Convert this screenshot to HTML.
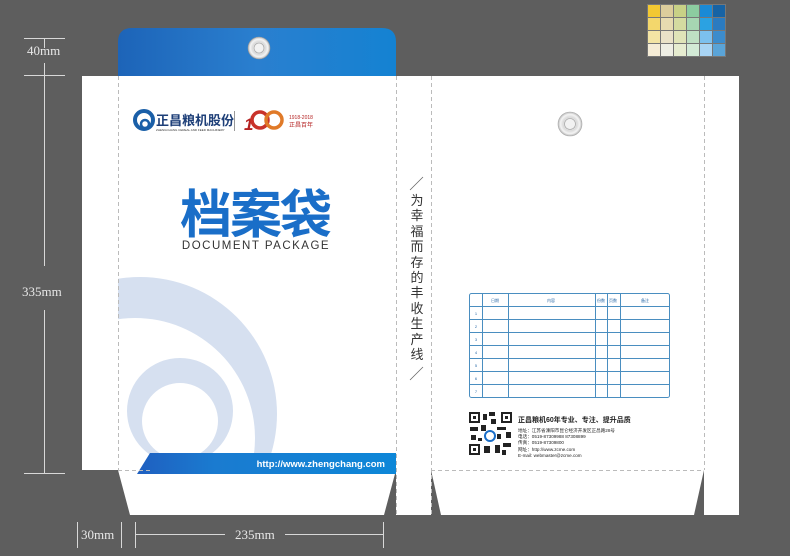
<!DOCTYPE html>
<html><head><meta charset="utf-8"><style>
body{margin:0;width:790px;height:556px;background:#5e5e5e;position:relative;overflow:hidden;font-family:"Liberation Sans","Noto Sans CJK SC",sans-serif}
.a{position:absolute}
.dim{color:#e8e8e8;font-family:"Liberation Serif",serif;font-size:13px}
.ln{background:#d8d8d8;position:absolute}
.vt{position:absolute;left:409px;width:16px;font-size:13px;color:#333;text-align:center;line-height:15.4px}
</style></head><body>
<div class="a" style="left:647px;top:4px;display:grid;grid-template-columns:repeat(6,12px);grid-auto-rows:12px;gap:1px;background:#777;padding:1px">
<div style="background:#f2c832"></div><div style="background:#dccd9c"></div><div style="background:#c8d186"></div><div style="background:#8ccca0"></div><div style="background:#1a8ad6"></div><div style="background:#1763a4"></div>
<div style="background:#f3d76c"></div><div style="background:#e6dbb0"></div><div style="background:#d4dba0"></div><div style="background:#a6d6b2"></div><div style="background:#2ba2e2"></div><div style="background:#2b7bc0"></div>
<div style="background:#f3e4a4"></div><div style="background:#eae2c8"></div><div style="background:#e0e4b8"></div><div style="background:#bfe0c4"></div><div style="background:#7cc0ee"></div><div style="background:#3c8ccc"></div>
<div style="background:#f5ecd6"></div><div style="background:#eeeee4"></div><div style="background:#e6ecd0"></div><div style="background:#d2ead6"></div><div style="background:#a8d4f4"></div><div style="background:#5aa4d8"></div>
</div>
<div class="ln" style="left:24px;top:38px;width:41px;height:1px"></div>
<div class="ln" style="left:44px;top:38px;width:1px;height:10px"></div>
<div class="dim a" style="left:27px;top:43px">40mm</div>
<div class="ln" style="left:44px;top:63px;width:1px;height:203px"></div>
<div class="ln" style="left:24px;top:75px;width:41px;height:1px"></div>
<div class="dim a" style="left:22px;top:284px">335mm</div>
<div class="ln" style="left:44px;top:310px;width:1px;height:164px"></div>
<div class="ln" style="left:24px;top:473px;width:41px;height:1px"></div>
<div class="ln" style="left:77px;top:522px;width:1px;height:26px"></div>
<div class="ln" style="left:121px;top:522px;width:1px;height:26px"></div>
<div class="ln" style="left:135px;top:522px;width:1px;height:26px"></div>
<div class="ln" style="left:383px;top:522px;width:1px;height:26px"></div>
<div class="dim a" style="left:81px;top:527px">30mm</div>
<div class="ln" style="left:135px;top:534px;width:90px;height:1px"></div>
<div class="ln" style="left:285px;top:534px;width:98px;height:1px"></div>
<div class="dim a" style="left:235px;top:527px">235mm</div>

<svg class="a" style="left:0;top:0" width="790" height="556">
<defs>
<linearGradient id="tab" x1="0" y1="0" x2="1" y2="0"><stop offset="0" stop-color="#1d64b8"/><stop offset=".5" stop-color="#2a7fcf"/><stop offset="1" stop-color="#1482d2"/></linearGradient>
<linearGradient id="band" x1="0" y1="0" x2="1" y2="0"><stop offset="0" stop-color="#1f5fc0"/><stop offset=".3" stop-color="#1a7bd0"/><stop offset="1" stop-color="#0d87d8"/></linearGradient>
<clipPath id="cp"><rect x="118" y="76" width="278" height="394"/></clipPath>
<radialGradient id="gr"><stop offset=".45" stop-color="#fff"/><stop offset=".55" stop-color="#d8d8d8"/><stop offset=".8" stop-color="#f4f4f4"/><stop offset="1" stop-color="#b8b8b8"/></radialGradient>
</defs>
<path d="M118 76 V42 Q118 28 132 28 H382 Q396 28 396 42 V76 Z" fill="url(#tab)"/>
<rect x="82" y="76" width="657" height="394" fill="#fff"/>
<polygon points="118,470 396,470 384,515 130,515" fill="#fff"/>
<rect x="396" y="470" width="35" height="45" fill="#fff"/>
<polygon points="431,470 704,470 694,515 441,515" fill="#fff"/>
<rect x="704" y="470" width="35" height="45" fill="#fff"/>
<g clip-path="url(#cp)" fill="#d6e0f0">
<path fill-rule="evenodd" d="M140 414 m-137 0 a137 137 0 1 0 274 0 a137 137 0 1 0 -274 0 Z M135 438 m-120 0 a120 120 0 1 0 240 0 a120 120 0 1 0 -240 0 Z"/>
<path fill-rule="evenodd" d="M180 411 m-53 0 a53 53 0 1 0 106 0 a53 53 0 1 0 -106 0 Z M180 421 m-38 0 a38 38 0 1 0 76 0 a38 38 0 1 0 -76 0 Z"/>
</g>
<polygon points="150,453 396,453 396,474 137,474" fill="url(#band)"/>
<text x="385" y="467" font-size="9.5" font-weight="bold" fill="#fff" text-anchor="end" font-family="Liberation Sans">http://www.zhengchang.com</text>
<g stroke="#bbb" stroke-width="1" stroke-dasharray="4,3" fill="none">
<line x1="118.5" y1="76" x2="118.5" y2="470"/><line x1="396.5" y1="76" x2="396.5" y2="515"/>
<line x1="431.5" y1="76" x2="431.5" y2="515"/><line x1="704.5" y1="76" x2="704.5" y2="470"/>
<line x1="431" y1="470.5" x2="704" y2="470.5"/><line x1="118" y1="470.5" x2="150" y2="470.5"/>
</g>
<line x1="410" y1="190" x2="423" y2="177" stroke="#666" stroke-width=".8"/>
<line x1="410" y1="380" x2="423" y2="367" stroke="#666" stroke-width=".8"/>
<circle cx="259" cy="48" r="11" fill="url(#gr)" stroke="#999" stroke-width=".6"/>
<circle cx="259" cy="48" r="5" fill="#f2f2f2" stroke="#aaa" stroke-width=".8"/>
<circle cx="570" cy="124" r="12" fill="url(#gr)" stroke="#aaa" stroke-width=".6"/>
<circle cx="570" cy="124" r="5.5" fill="#f2f2f2" stroke="#aaa" stroke-width=".8"/>
<circle cx="144" cy="120" r="9" fill="none" stroke="#1a5fa8" stroke-width="4"/>
<circle cx="145" cy="124" r="4" fill="none" stroke="#1a5fa8" stroke-width="2.5"/>
<text x="156" y="125" font-size="13" font-weight="bold" fill="#1e3f78">正昌粮机股份</text>
<text x="156" y="131" font-size="3" fill="#333">ZHENGCHANG CEREAL AND FEED MACHINERY</text>
<line x1="234.5" y1="111" x2="234.5" y2="131" stroke="#999"/>
<text x="244" y="130" font-size="17" font-weight="bold" fill="#b52222" font-style="italic">1</text>
<circle cx="260" cy="120" r="8" fill="none" stroke="#c8322a" stroke-width="3.5"/>
<circle cx="274" cy="120" r="8" fill="none" stroke="#e07a28" stroke-width="3.5"/>
<text x="289" y="119" font-size="5" fill="#b52222">1918-2018</text>
<text x="289" y="127" font-size="6" fill="#b52222">正昌百年</text>
<text x="255" y="233" font-size="52" font-weight="bold" fill="#1a6ec8" text-anchor="middle" font-family="Noto Sans CJK SC" style="letter-spacing:-2px">档案袋</text>
<text x="256" y="249" font-size="11.5" fill="#333" text-anchor="middle" style="letter-spacing:1.5px">DOCUMENT PACKAGE</text>
<g stroke="#4a8ec0" stroke-width="1" fill="none">
<rect x="469.5" y="293.5" width="200" height="104" rx="2"/>
<line x1="482.5" y1="293" x2="482.5" y2="398"/><line x1="508.5" y1="293" x2="508.5" y2="398"/>
<line x1="595.5" y1="293" x2="595.5" y2="398"/><line x1="607.5" y1="293" x2="607.5" y2="398"/><line x1="620.5" y1="293" x2="620.5" y2="398"/>
<line x1="469" y1="306.5" x2="670" y2="306.5"/><line x1="469" y1="319.5" x2="670" y2="319.5"/><line x1="469" y1="332.5" x2="670" y2="332.5"/>
<line x1="469" y1="345.5" x2="670" y2="345.5"/><line x1="469" y1="358.5" x2="670" y2="358.5"/><line x1="469" y1="371.5" x2="670" y2="371.5"/><line x1="469" y1="384.5" x2="670" y2="384.5"/>
</g>
<g font-size="4" fill="#2a6aa8" text-anchor="middle">
<text x="495" y="302">日期</text><text x="551" y="302">内容</text><text x="601" y="302">份数</text><text x="613" y="302">页数</text><text x="645" y="302">备注</text>
<text x="476" y="315">1</text><text x="476" y="328">2</text><text x="476" y="341">3</text><text x="476" y="354">4</text><text x="476" y="367">5</text><text x="476" y="380">6</text><text x="476" y="393">7</text>
</g>
<rect x="469" y="412" width="43" height="43" fill="#fff"/>
<g fill="#222">
<rect x="469" y="412" width="11" height="11"/><rect x="501" y="412" width="11" height="11"/><rect x="469" y="444" width="11" height="11"/>
<rect x="483" y="414" width="4" height="6"/><rect x="489" y="412" width="6" height="4"/><rect x="491" y="419" width="5" height="5"/><rect x="470" y="427" width="8" height="4"/><rect x="481" y="425" width="5" height="6"/><rect x="497" y="427" width="9" height="3"/><rect x="506" y="432" width="5" height="6"/><rect x="471" y="435" width="5" height="5"/><rect x="484" y="446" width="6" height="7"/><rect x="495" y="445" width="5" height="8"/><rect x="503" y="443" width="8" height="4"/><rect x="502" y="450" width="4" height="5"/>
<rect x="486" y="433" width="3" height="3"/><rect x="478" y="438" width="4" height="3"/><rect x="497" y="434" width="4" height="5"/><rect x="484" y="416" width="3" height="3"/>
</g>
<g fill="#fff"><rect x="471" y="414" width="7" height="7"/><rect x="503" y="414" width="7" height="7"/><rect x="471" y="446" width="7" height="7"/></g>
<g fill="#222"><rect x="473" y="416" width="3" height="3"/><rect x="505" y="416" width="3" height="3"/><rect x="473" y="448" width="3" height="3"/></g>
<circle cx="490" cy="436" r="5" fill="#fff" stroke="#1a6ec8" stroke-width="2"/>
<text x="518" y="422" font-size="7" font-weight="bold" fill="#222">正昌粮机60年专业、专注、提升品质</text>
<g font-size="4.6" fill="#222">
<text x="518" y="432">地址：江苏省溧阳市昆仑经济开发区正昌路28号</text>
<text x="518" y="438">电话：0519-87309988 87308899</text>
<text x="518" y="444">传真：0519-87309800</text>
<text x="518" y="451">网址：http://www.zcme.com</text>
<text x="518" y="457">E-mail: webmaster@zcme.com</text>
</g>
</svg>
<div class="vt" style="top:193px">为<br>幸<br>福<br>而<br>存<br>的<br>丰<br>收<br>生<br>产<br>线</div>
</body></html>
